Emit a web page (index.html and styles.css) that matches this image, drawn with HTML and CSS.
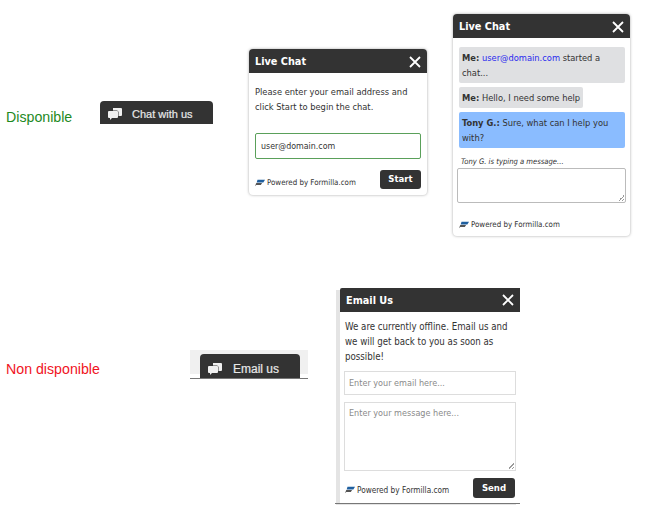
FILE: index.html
```html
<!DOCTYPE html>
<html lang="en">
<head>
    <meta charset="UTF-8">
    <title>Live Chat Widget</title>
    <link rel="stylesheet" href="styles.css">
</head>
<body>

<!-- Online state -->
<p class="status status-on">Disponible</p>

<div class="tab tab-chat">
    <svg class="tab-icon" viewBox="0 0 14 12"><path d="M5 0h8a1 1 0 0 1 1 1v6a1 1 0 0 1-1 1H5z"/><path class="tab-icon-front" d="M1 3h8a1 1 0 0 1 1 1v5a1 1 0 0 1-1 1H4l-2 2v-2H1a1 1 0 0 1-1-1V4a1 1 0 0 1 1-1z"/></svg>
    <span>Chat with us</span>
</div>

<div class="panel panel-start">
    <div class="panel-head">
        <span>Live Chat</span>
        <svg class="close" viewBox="0 0 12 12"><path d="M1 1l10 10M11 1L1 11"/></svg>
    </div>
    <div class="panel-body">
        <p class="intro">Please enter your email address and click Start to begin the chat.</p>
        <div class="email-box">user@domain.com</div>
        <div class="panel-foot">
            <span class="powered">
                <svg class="logo" viewBox="0 0 12 8"><path class="logo-blue" d="M3 0h9L10 3.500H2z"/><path class="logo-dark" d="M1.500 4h7L7 6.500H1.500L0 8z"/></svg>
                Powered by Formilla.com
            </span>
            <span class="btn">Start</span>
        </div>
    </div>
</div>

<div class="panel panel-chat">
    <div class="panel-head">
        <span>Live Chat</span>
        <svg class="close" viewBox="0 0 12 12"><path d="M1 1l10 10M11 1L1 11"/></svg>
    </div>
    <div class="panel-body">
        <div class="msg"><b>Me:</b> <span class="mail">user@domain.com</span> started a chat...</div>
        <div class="msg msg-short"><b>Me:</b> Hello, I need some help</div>
        <div class="msg msg-agent"><b>Tony G.:</b> Sure, what can I help you with?</div>
        <div class="typing">Tony G. is typing a message...</div>
        <div class="chat-input"><i class="grip"></i></div>
        <span class="powered">
            <svg class="logo" viewBox="0 0 12 8"><path class="logo-blue" d="M3 0h9L10 3.500H2z"/><path class="logo-dark" d="M1.500 4h7L7 6.500H1.500L0 8z"/></svg>
            Powered by Formilla.com
        </span>
    </div>
</div>

<!-- Offline state -->
<p class="status status-off">Non disponible</p>

<div class="tab-strip">
    <div class="tab tab-mail">
        <svg class="tab-icon" viewBox="0 0 14 12"><path d="M5 0h8a1 1 0 0 1 1 1v6a1 1 0 0 1-1 1H5z"/><path class="tab-icon-front" d="M1 3h8a1 1 0 0 1 1 1v5a1 1 0 0 1-1 1H4l-2 2v-2H1a1 1 0 0 1-1-1V4a1 1 0 0 1 1-1z"/></svg>
        <span>Email us</span>
    </div>
</div>

<div class="panel panel-mail">
    <div class="panel-head">
        <span>Email Us</span>
        <svg class="close" viewBox="0 0 12 12"><path d="M1 1l10 10M11 1L1 11"/></svg>
    </div>
    <div class="panel-body">
        <p class="intro">We are currently offline. Email us and we will get back to you as soon as possible!</p>
        <div class="field field-line">Enter your email here...</div>
        <div class="field field-area">Enter your message here...<i class="grip"></i></div>
        <div class="panel-foot">
            <span class="powered">
                <svg class="logo" viewBox="0 0 12 8"><path class="logo-blue" d="M3 0h9L10 3.500H2z"/><path class="logo-dark" d="M1.500 4h7L7 6.500H1.500L0 8z"/></svg>
                Powered by Formilla.com
            </span>
            <span class="btn">Send</span>
        </div>
    </div>
</div>

</body>
</html>
```

FILE: styles.css
```css
/* Page is a free canvas of widget snapshots */
body {
    margin: 0;
    width: 650px;
    height: 505px;
    position: relative;
    overflow: hidden;
    background: #ffffff;
    font-family: "DejaVu Sans", sans-serif;
    font-stretch: condensed;
    color: #333333;
}

.status {
    position: absolute;
    left: 6px;
    margin: 0;
    font-family: "Liberation Sans", sans-serif;
    font-stretch: normal;
    font-size: 14.200px;
    line-height: 18px;
}

.status-on {
    top: 108px;
    color: #1f8a1f;
}

.status-off {
    top: 360px;
    color: #f0141e;
}

/* Tabs */
.tab {
    display: flex;
    align-items: center;
    background: #333333;
    color: #e8e8e8;
    font-family: "Liberation Sans", sans-serif;
    font-stretch: normal;
    -webkit-text-stroke: 0.2px #e8e8e8;
    border-radius: 4px 4px 0 0;
    box-sizing: border-box;
}

.tab-icon {
    fill: #f0f0f0;
    flex: none;
    width: 14px;
    height: 12px;
}

.tab-icon-front {
    stroke: #333333;
    stroke-width: 1;
    paint-order: stroke;
}

.tab-chat {
    position: absolute;
    left: 100px;
    top: 101px;
    width: 113px;
    height: 23px;
    padding: 3px 0 0 8px;
    font-size: 11px;
    gap: 10px;
}

.tab-strip {
    position: absolute;
    left: 190px;
    top: 350px;
    width: 108px;
    height: 24px;
    padding: 0 0 4px 10px;
    background: linear-gradient(#f0f0f0 24px, #ffffff 24px);
    border-bottom: 1px solid #777777;
    display: flex;
    align-items: flex-end;
}

.tab-mail {
    width: 100px;
    height: 24px;
    margin-bottom: -4px;
    padding: 6px 0 0 8px;
    font-size: 12px;
    gap: 11px;
}

/* Panels */
.panel {
    position: absolute;
    background: #ffffff;
    border-radius: 4px;
    box-shadow: 0 0 3px rgba(0, 0, 0, 0.35);
    font-size: 9.250px;
    line-height: 15px;
}

.panel-head {
    display: flex;
    justify-content: space-between;
    align-items: center;
    background: #333333;
    color: #ffffff;
    font-size: 10.800px;
    font-weight: bold;
    border-radius: 4px 4px 0 0;
}

.close {
    width: 12px;
    height: 12px;
    fill: none;
    stroke: #ffffff;
    stroke-width: 1.800;
}

.intro {
    margin: 0;
}

.powered {
    display: inline-flex;
    align-items: center;
    gap: 2px;
    font-size: 7.900px;
    line-height: 12px;
}

.logo {
    width: 10px;
    height: 8px;
}

.logo-blue {
    fill: #1f5f9f;
}

.logo-dark {
    fill: #555555;
}

.panel-foot {
    display: flex;
    justify-content: space-between;
    align-items: flex-end;
}

.btn {
    background: #333333;
    color: #ffffff;
    font-size: 9.500px;
    font-weight: bold;
    border-radius: 3px;
    text-align: center;
    width: 41px;
    height: 19px;
    line-height: 18px;
}

.grip {
    position: absolute;
    right: 1px;
    bottom: 1px;
    width: 6px;
    height: 6px;
    background: linear-gradient(135deg, transparent 50%, #999999 50%, #999999 60%, transparent 60%, transparent 78%, #999999 78%, #999999 88%, transparent 88%);
}

/* Start chat panel */
.panel-start {
    left: 249px;
    top: 49px;
    width: 178px;
    height: 146px;
}

.panel-start .panel-head,
.panel-chat .panel-head {
    height: 23px;
    padding: 1px 6px 0;
}

.panel-start .panel-body {
    padding: 11px 6px 0;
}

.email-box {
    margin-top: 19px;
    height: 24px;
    border: 1px solid #5aa05a;
    border-radius: 2px;
    padding: 0 5px;
    font-size: 8.800px;
    line-height: 24px;
}

.panel-start .panel-foot {
    margin-top: 11px;
}

/* Conversation panel */
.panel-chat {
    left: 453px;
    top: 14px;
    width: 177px;
    height: 222px;
}

.panel-chat .panel-body {
    padding: 9px 5px 0 6px;
}

.msg {
    background: #dfe0e2;
    border-radius: 2px;
    padding: 3px;
    margin-bottom: 4px;
}

.msg-short {
    width: fit-content;
}

.msg-agent {
    background: #8abcff;
}

.mail {
    color: #2a2aee;
}

.typing {
    font-size: 7.600px;
    font-style: italic;
    line-height: 10px;
    margin: 9px 0 1px 2px;
}

.chat-input {
    position: relative;
    height: 33px;
    border: 1px solid #bbbbbb;
    border-radius: 2px;
    margin-left: -2px;
    margin-right: -1px;
}

.panel-chat .powered {
    margin-top: 16px;
}

/* Offline email panel */
.panel-mail {
    left: 340px;
    top: 288px;
    width: 180px;
    height: 215px;
    border-radius: 0;
    box-shadow: -4px 2px 0 #e4e4e4;
    font-size: 9.650px;
}

/* Rule under the panel runs past its left edge */
.panel-mail::after {
    content: "";
    position: absolute;
    left: -5px;
    right: 0;
    bottom: -1px;
    height: 1px;
    background: #777777;
}

.panel-mail .panel-head {
    height: 24px;
    padding: 0 6px;
    border-radius: 2px 0 0 0;
}

.panel-mail .panel-body {
    padding: 7px 4px 0;
}

.panel-mail .intro {
    padding-left: 1px;
}

.panel-mail .panel-foot {
    margin-top: 7px;
    align-items: center;
}

.panel-mail .powered {
    font-size: 8.200px;
    padding: 4px 0 0 1px;
}

.panel-mail .btn {
    width: 42px;
    height: 20px;
    line-height: 19px;
    margin-right: 1px;
}

.field {
    border: 1px solid #dddddd;
    color: #8a8a8a;
    font-size: 9px;
    padding: 0 4px;
    position: relative;
}

.field-line {
    margin-top: 7px;
    height: 22px;
    line-height: 22px;
}

.field-area {
    margin-top: 7px;
    height: 67px;
    line-height: 20px;
}
```
